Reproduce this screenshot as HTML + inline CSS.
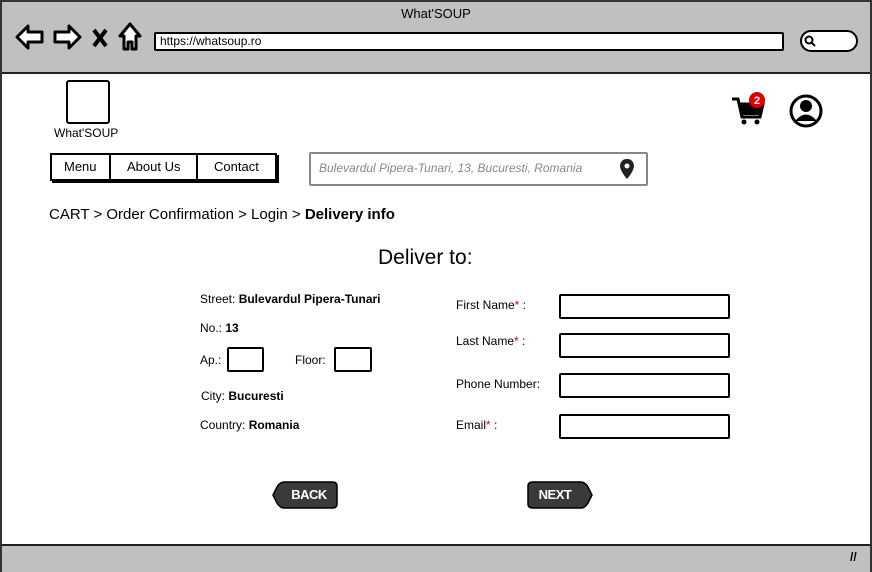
<!DOCTYPE html>
<html><head><style>
body{margin:0;width:872px;height:572px;position:relative;background:#fff;font-family:"Liberation Sans",sans-serif;overflow:hidden;color:#000}
.a{position:absolute}
.box{position:absolute;border:2px solid #000;border-radius:2px;background:#fff;box-sizing:border-box}
.t{position:absolute;font-size:12px;white-space:nowrap}
</style></head><body>
<div class="a" style="left:0;top:0;width:872px;height:572px;border:2px solid #333;box-sizing:border-box"></div>
<div class="a" style="left:2px;top:2px;width:868px;height:70px;background:#c0c0c0;border-bottom:2px solid #222"></div>
<div class="t" style="left:0;width:872px;text-align:center;top:6px;font-size:13px">What'SOUP</div>
<svg class="a" style="left:14px;top:22px" width="130" height="30" viewBox="0 0 130 30" fill="#fff" stroke="#000" stroke-width="3" stroke-linejoin="round">
<path d="M3 15 L14 4 V10 H28 V20 H14 V26 Z"/>
<path d="M66 15 L55 4 V10 H41 V20 H55 V26 Z"/>
<path d="M80 8 L92 24 M92 8 L80 24" stroke-width="4"/>
<path d="M116 2 L106 14 H110 V27 H114 V20 H118 V27 H122 V14 H126 Z"/>
</svg>
<div class="box" style="left:154px;top:32px;width:630px;height:19px"></div>
<div class="t" style="left:160px;top:34px;font-size:12px">https://whatsoup.ro</div>
<div class="box" style="left:800px;top:30px;width:58px;height:22px;border-radius:11px"></div>
<svg class="a" style="left:804px;top:35px" width="12" height="12"><circle cx="5" cy="5" r="3.5" fill="none" stroke="#000" stroke-width="2"/><path d="M7.5 7.5 L11 11" stroke="#000" stroke-width="2"/></svg>
<div class="a" style="left:2px;top:544px;width:868px;height:26px;background:#c0c0c0;border-top:2px solid #222"></div>
<div class="t" style="left:850px;top:550px;font-size:12px;font-weight:bold">//</div>

<div class="box" style="left:66px;top:80px;width:44px;height:44px;border-radius:3px"></div>
<div class="t" style="left:54px;top:126px;font-size:12px">What'SOUP</div>
<svg class="a" style="left:730px;top:92px" width="36" height="34" viewBox="0 0 36 34"><path d="M2 7 H8 L12 25 H30 L33 12 H10" fill="none" stroke="#000" stroke-width="3"/><rect x="10" y="12" width="21" height="11" fill="#000"/><circle cx="14" cy="30" r="2.5"/><circle cx="27" cy="30" r="2.5"/><circle cx="27" cy="8" r="8" fill="#d00"/><text x="27" y="12" font-size="11" font-weight="bold" fill="#fff" text-anchor="middle" font-family="Liberation Sans">2</text></svg>
<svg class="a" style="left:789px;top:94px" width="34" height="34" viewBox="0 0 34 34"><circle cx="17" cy="17" r="15" fill="none" stroke="#000" stroke-width="3"/><circle cx="17" cy="12" r="6"/><path d="M6 27 Q17 14 28 27 Z"/></svg>

<div class="a" style="left:50px;top:153px;width:227px;height:28px;box-shadow:2px 2px 0 #000"></div>
<div class="box" style="left:50px;top:153px;width:61px;height:28px;border-radius:0"></div>
<div class="box" style="left:109px;top:153px;width:89px;height:28px;border-radius:0"></div>
<div class="box" style="left:196px;top:153px;width:81px;height:28px;border-radius:0"></div>
<div class="t" style="left:64px;top:159px;font-size:13px">Menu</div>
<div class="t" style="left:127px;top:159px;font-size:13px">About Us</div>
<div class="t" style="left:214px;top:159px;font-size:13px">Contact</div>
<div class="box" style="left:309px;top:152px;width:339px;height:34px;border-color:#888"></div>
<div class="t" style="left:319px;top:161px;font-size:12px;font-style:italic;color:#888">Bulevardul Pipera-Tunari, 13, Bucuresti, Romania</div>
<svg class="a" style="left:619px;top:158px" width="16" height="22" viewBox="0 0 16 22"><path d="M8 1 C3 1 1 5 1 8 C1 13 8 21 8 21 C8 21 15 13 15 8 C15 5 13 1 8 1 Z" fill="#222"/><circle cx="8" cy="8" r="2.5" fill="#fff"/></svg>

<div class="t" style="left:49px;top:206px;font-size:15px">CART &gt; Order Confirmation &gt; Login &gt; <b>Delivery info</b></div>
<div class="t" style="left:378px;top:246px;font-size:21px">Deliver to:</div>

<div class="t" style="left:200px;top:292px">Street: <b>Bulevardul Pipera-Tunari</b></div>
<div class="t" style="left:200px;top:321px">No.: <b>13</b></div>
<div class="t" style="left:200px;top:353px">Ap.:</div>
<div class="box" style="left:227px;top:347px;width:37px;height:25px"></div>
<div class="t" style="left:295px;top:353px">Floor:</div>
<div class="box" style="left:334px;top:347px;width:38px;height:25px"></div>
<div class="t" style="left:201px;top:389px">City: <b>Bucuresti</b></div>
<div class="t" style="left:200px;top:418px">Country: <b>Romania</b></div>

<div class="t" style="left:456px;top:298px">First Name<span style="color:#d00">*</span> :</div>
<div class="t" style="left:456px;top:334px">Last Name<span style="color:#d00">*</span> :</div>
<div class="t" style="left:456px;top:377px">Phone Number:</div>
<div class="t" style="left:456px;top:418px">Email<span style="color:#d00">*</span> :</div>
<div class="box" style="left:559px;top:294px;width:171px;height:25px"></div>
<div class="box" style="left:559px;top:333px;width:171px;height:25px"></div>
<div class="box" style="left:559px;top:373px;width:171px;height:25px"></div>
<div class="box" style="left:559px;top:414px;width:171px;height:25px"></div>

<svg class="a" style="left:272px;top:481px" width="66" height="28"><path d="M12 1 H60 Q65 1 65 5 V23 Q65 27 60 27 H12 Q8 27 5 22 L1 14 L5 6 Q8 1 12 1 Z" fill="#3a3a3a" stroke="#000" stroke-width="1.5"/><text x="37" y="18" font-size="13" font-weight="bold" fill="#fff" text-anchor="middle" font-family="Liberation Sans" letter-spacing="-0.5">BACK</text></svg>
<svg class="a" style="left:527px;top:481px" width="66" height="28"><path d="M6 1 H54 Q58 1 61 6 L65 14 L61 22 Q58 27 54 27 H6 Q1 27 1 23 V5 Q1 1 6 1 Z" fill="#3a3a3a" stroke="#000" stroke-width="1.5"/><text x="28" y="18" font-size="13" font-weight="bold" fill="#fff" text-anchor="middle" font-family="Liberation Sans" letter-spacing="-0.5">NEXT</text></svg>
</body></html>
